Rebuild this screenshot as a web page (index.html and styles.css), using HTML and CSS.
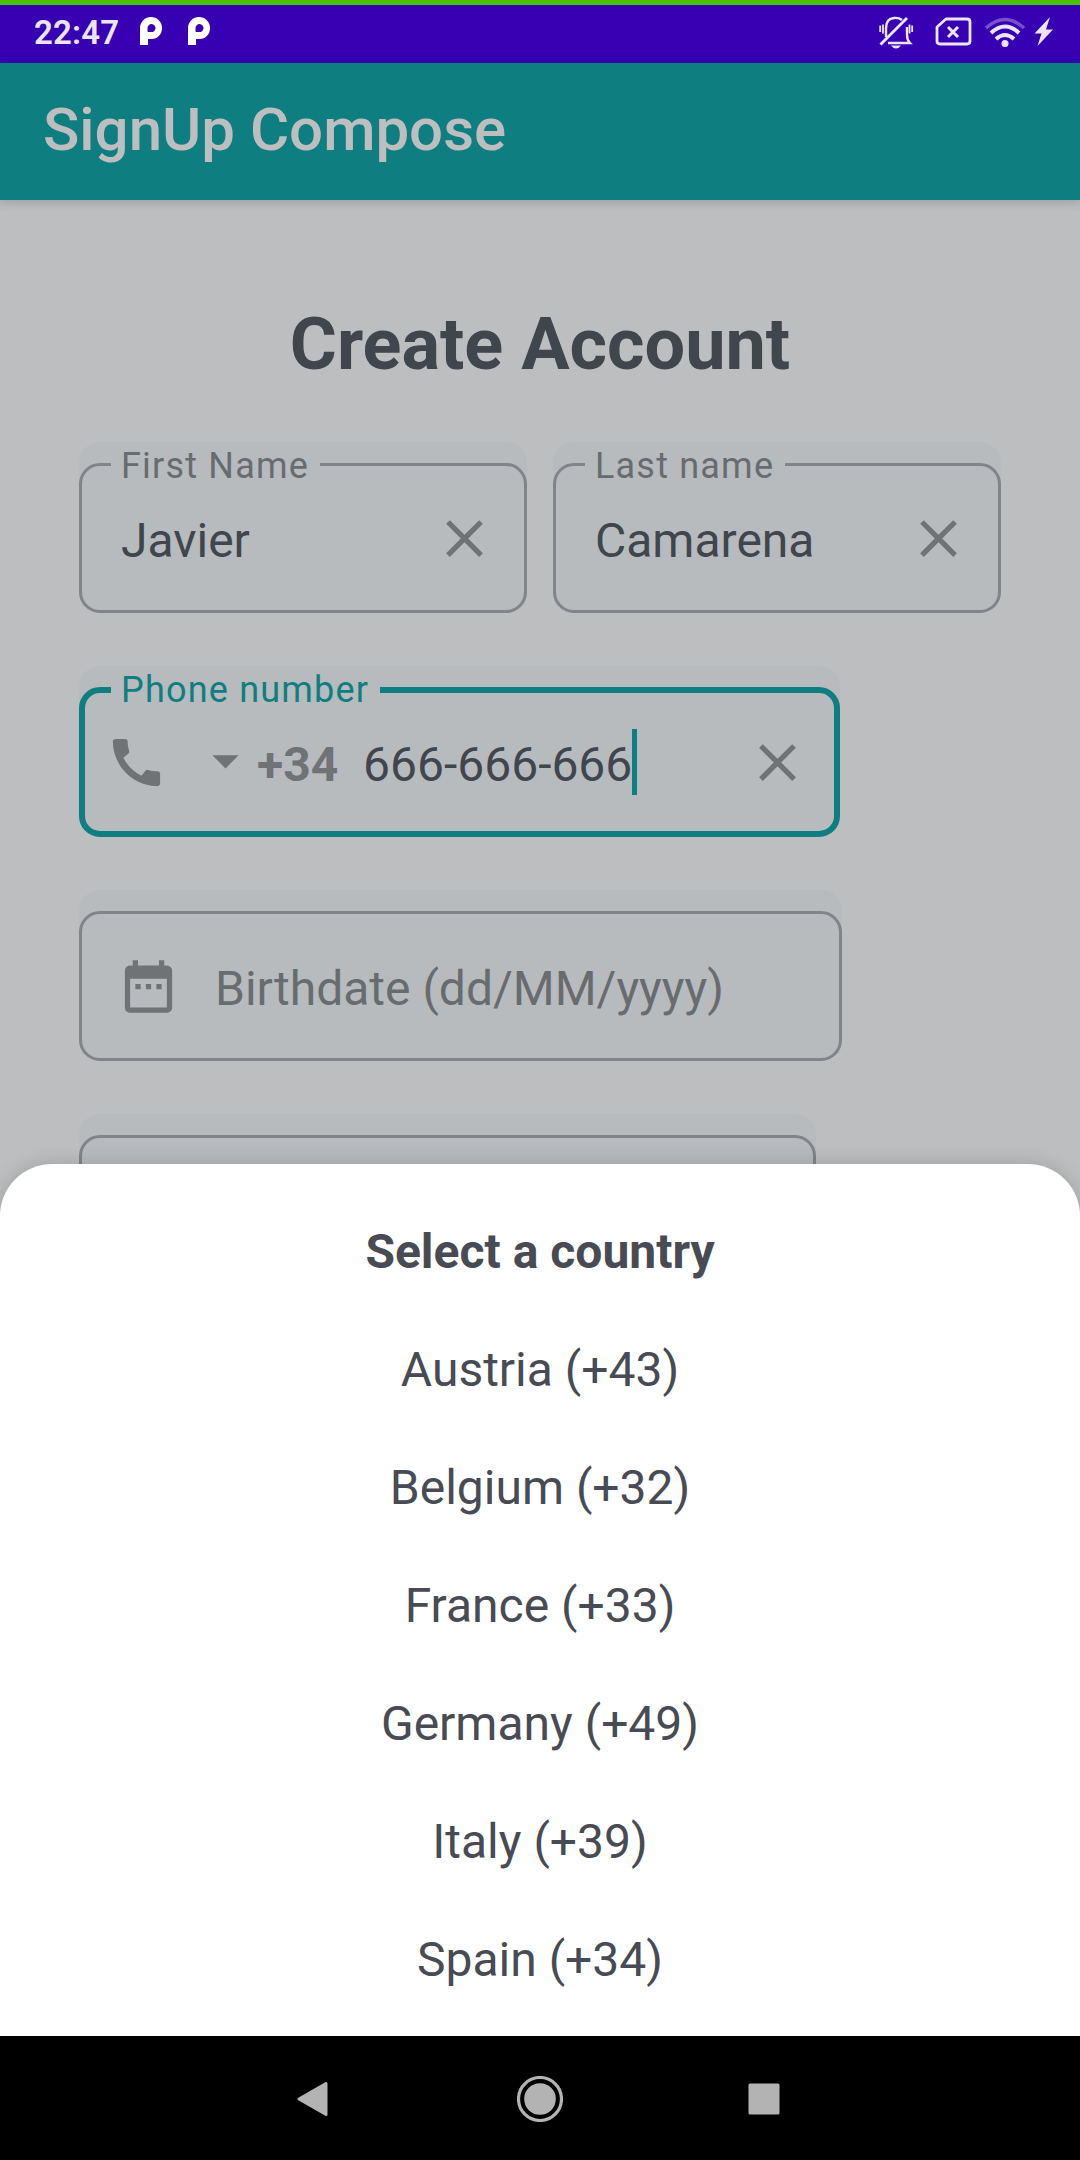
FILE: index.html
```
<!DOCTYPE html>
<html lang="en">
<head>
<meta charset="utf-8">
<title>SignUp Compose</title>
<link rel="stylesheet" href="styles.css">
</head>
<body>
<div class="screen">
  <header class="status">
    <span class="clock">22:47</span>
    <svg class="p-icon" viewBox="0 0 22 28"><path fill="#fff" fill-rule="evenodd" d="M0 28V11A11 11 0 0 1 22 11A10.500 10.500 0 0 1 11.500 22H8V28ZM8 15H11A4 4 0 1 0 7.500 11V14.500Z"/></svg>
    <svg class="p-icon" viewBox="0 0 22 28"><path fill="#fff" fill-rule="evenodd" d="M0 28V11A11 11 0 0 1 22 11A10.500 10.500 0 0 1 11.500 22H8V28ZM8 15H11A4 4 0 1 0 7.500 11V14.500Z"/></svg>
    <svg class="system-icons" viewBox="0 0 176 34" fill="none" stroke="#ebe5f7" stroke-width="2.400">
      <path d="M7 21V12C7 6 10 2.500 15 2Q20 1.500 23 4M28 11V19Q28 24 31 27H9"/>
      <path d="M1.500 28.500L28 2" stroke-width="2.800"/>
      <path d="M1.200 9.500V16M4 8.500V17.500M30.500 8.500V17.500M33.200 9.500V16" stroke-width="1.800"/>
      <path d="M12 29.500H22Q20 32.500 17 32.500T12 29.500Z" fill="#ebe5f7" stroke="none"/>
      <path d="M67 3H88Q91 3 91 6V25Q91 28 88 28H61Q58 28 58 25V11Z" stroke-width="2.800" stroke-linejoin="round"/>
      <path d="M69 11L79 21M79 11L69 21" stroke-width="3"/>
      <path d="M107 12Q126 -5 145 12" stroke="#7a50cb" stroke-width="3.400"/>
      <path d="M112 17Q126 4 140 17" stroke-width="4"/>
      <path d="M117 23Q126 15 135 23" stroke-width="4"/>
      <circle cx="126" cy="27.500" r="3.500" fill="#ebe5f7" stroke="none"/>
      <path d="M171 1L155.500 17.500H162.500L158.500 30L174 13.500H167Z" fill="#ebe5f7" stroke="none"/>
    </svg>
  </header>

  <div class="appbar"><h1>SignUp Compose</h1></div>

  <main class="form">
    <h2>Create Account</h2>
    <div class="row">
      <div class="field half">
        <div class="outline">
          <span class="label">First Name</span>
          <span class="value">Javier</span>
          <svg class="icon clear" viewBox="0 0 24 24"><path d="M19 6.410L17.590 5 12 10.590 6.410 5 5 6.410 10.590 12 5 17.590 6.410 19 12 13.410 17.590 19 19 17.590 13.410 12z"/></svg>
        </div>
      </div>
      <div class="field half">
        <div class="outline">
          <span class="label">Last name</span>
          <span class="value">Camarena</span>
          <svg class="icon clear" viewBox="0 0 24 24"><path d="M19 6.410L17.590 5 12 10.590 6.410 5 5 6.410 10.590 12 5 17.590 6.410 19 12 13.410 17.590 19 19 17.590 13.410 12z"/></svg>
        </div>
      </div>
    </div>

    <div class="field phone">
      <div class="outline focused">
        <span class="label">Phone number</span>
        <svg class="icon" viewBox="0 0 24 24"><path d="M20.010 15.380c-1.230 0-2.420-.2-3.530-.56-.35-.12-.74-.03-1.010.24l-1.570 1.970c-2.830-1.350-5.480-3.900-6.890-6.830l1.950-1.660c.27-.28.35-.67.24-1.020-.37-1.110-.56-2.300-.56-3.530 0-.54-.45-.99-.99-.99H4.190C3.650 3 3 3.240 3 3.990 3 13.280 10.730 21 20.010 21c.71 0 .99-.63.99-1.180v-3.450c0-.54-.45-.99-.99-.99z"/></svg>
        <svg class="icon arrow" viewBox="0 0 24 24"><path d="M7 10l5 5 5-5z"/></svg>
        <span class="code">+34</span>
        <span class="value">666-666-666</span>
        <span class="cursor"></span>
        <svg class="icon clear" viewBox="0 0 24 24"><path d="M19 6.410L17.590 5 12 10.590 6.410 5 5 6.410 10.590 12 5 17.590 6.410 19 12 13.410 17.590 19 19 17.590 13.410 12z"/></svg>
      </div>
    </div>

    <div class="field birthdate">
      <div class="outline">
        <svg class="icon" viewBox="0 0 24 24"><path d="M9 11H7v2h2v-2zm4 0h-2v2h2v-2zm4 0h-2v2h2v-2zm2-7h-1V2h-2v2H8V2H6v2H5c-1.110 0-1.990.9-1.990 2L3 20c0 1.100.89 2 2 2h14c1.100 0 2-.9 2-2V6c0-1.100-.9-2-2-2zm0 16H5V9h14v11z"/></svg>
        <span class="placeholder">Birthdate (dd/MM/yyyy)</span>
      </div>
    </div>

    <div class="field next"><div class="outline"></div></div>
  </main>

  <section class="sheet">
    <h3>Select a country</h3>
    <ul>
      <li>Austria (+43)</li>
      <li>Belgium (+32)</li>
      <li>France (+33)</li>
      <li>Germany (+49)</li>
      <li>Italy (+39)</li>
      <li>Spain (+34)</li>
    </ul>
  </section>

  <nav class="navbar">
    <svg class="nav-icon" viewBox="0 0 46 46"><path d="M6 23L33 7.500V38.500Z" stroke="#b3b3b3" stroke-width="3" stroke-linejoin="round"/></svg>
    <svg class="nav-icon" viewBox="0 0 46 46"><circle cx="23" cy="23" r="15.800"/><circle cx="23" cy="23" r="21.500" fill="none" stroke="#b3b3b3" stroke-width="3.200"/></svg>
    <svg class="nav-icon" viewBox="0 0 46 46"><rect x="7.500" y="7.500" width="31" height="31" rx="1.500"/></svg>
  </nav>
</div>
</body>
</html>
```
FILE: styles.css
```
* { box-sizing: border-box; margin: 0; padding: 0; }
body { font-family: Roboto, sans-serif; background: #bdbec0; }
svg { display: block; flex: none; }

.screen {
  width: 1080px;
  height: 2160px;
  display: flex;
  flex-direction: column;
  overflow: hidden;
  background: #bdbec0;
  color: #41454c;
}

.status {
  flex: none;
  height: 63px;
  border-top: 5px solid #49c200;
  background: #3700b3;
  display: flex;
  align-items: flex-start;
  padding: 12px 25px 0 34px;
}
.clock {
  width: 106px;
  font-size: 33px;
  font-weight: 600;
  line-height: 32px;
  letter-spacing: 0.2px;
  color: #ebe5f7;
}
.p-icon { width: 22px; height: 28px; margin-right: 26px; }
.system-icons { width: 176px; height: 34px; margin: -1px 0 0 auto; }

.appbar {
  flex: none;
  height: 137px;
  background: #0f7e80;
  padding: 31px 43px;
  box-shadow: 0 2px 10px rgba(0, 0, 0, 0.18);
}
.appbar h1 {
  font-size: 60px;
  font-weight: 500;
  line-height: 72px;
  color: #bdbec0;
}

.form {
  flex: none;
  height: 964px;
  padding: 107px 79px 0;
  overflow: hidden;
}
.form h2 {
  font-size: 72px;
  font-weight: 700;
  line-height: 76px;
  text-align: center;
  height: 135px;
}
.row { display: flex; gap: 26px; }
.field {
  height: 171px;
  padding-top: 21px;
  margin-bottom: 53px;
  border-radius: 21px;
  background: #b7bbbe;
}
.half { width: 448px; }
.phone { width: 761px; }
.birthdate { width: 763px; }
.next { width: 737px; }
.outline {
  position: relative;
  height: 150px;
  display: flex;
  align-items: center;
  border: 3px solid #818488;
  border-radius: 21px;
  padding: 0 28px 0 39px;
}
.focused { border: 6px solid #0f7e80; padding: 0 25px 0 20px; }
.birthdate .outline { padding-left: 35px; }

/* floating label laid over the outline's top edge */
.label {
  position: absolute;
  left: 29px;
  top: -20px;
  padding: 0 11px 0 10px;
  background: #b7bbbe;
  font-size: 36px;
  line-height: 40px;
  letter-spacing: 1.200px;
  color: #686c6f;
  white-space: nowrap;
}
.focused .label { left: 26px; top: -23px; color: #0f7e80; }

.value, .placeholder {
  margin-top: 6px;
  font-size: 48px;
  line-height: 60px;
  white-space: nowrap;
}
.placeholder { margin-left: 35px; color: #686c6f; }
.icon { width: 63px; height: 63px; fill: #6f7376; }
.clear { margin-left: auto; }
.arrow { margin: -4px 0 0 26px; }
.code {
  margin-top: 6px;
  width: 106px;
  font-size: 48px;
  font-weight: 700;
  line-height: 60px;
  color: #6f7376;
}
.cursor { width: 5px; height: 66px; background: #0f7e80; }

.sheet {
  position: relative;
  flex: none;
  height: 872px;
  padding-top: 29px;
  border-radius: 52px 52px 0 0;
  background: #fff;
  box-shadow: 0 0 20px rgba(0, 0, 0, 0.16);
  color: #484b53;
  text-align: center;
  font-size: 48px;
  line-height: 118px;
}
.sheet h3 { font-size: 48px; font-weight: 700; }
.sheet ul { list-style: none; }

.navbar {
  position: relative;
  flex: none;
  height: 124px;
  background: #000;
  display: flex;
  justify-content: center;
  align-items: center;
  gap: 178px;
  padding-top: 1px;
}
.nav-icon { width: 46px; height: 46px; fill: #b3b3b3; }
```
